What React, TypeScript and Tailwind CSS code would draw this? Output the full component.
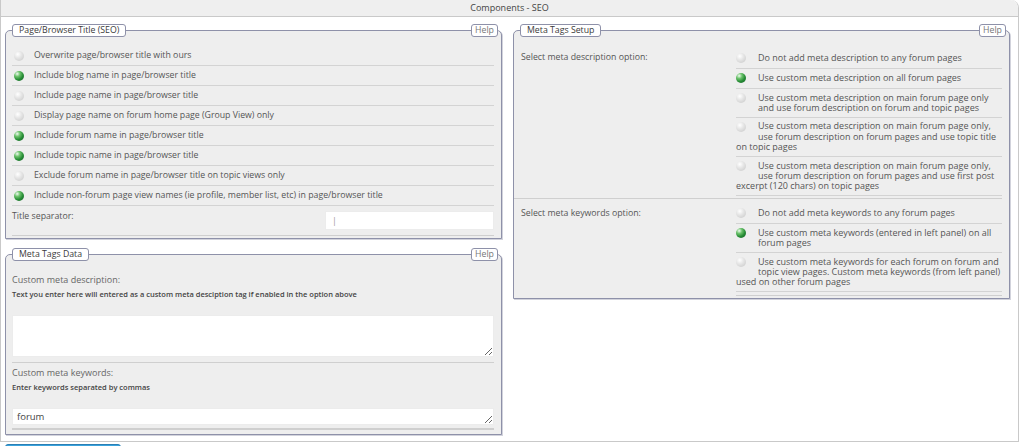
import React from "react";

const Radio = ({ on }: { on: boolean }) => (
  <span
    className={`block w-[10px] h-[10px] rounded-full ${
      on
        ? "bg-[radial-gradient(circle_at_32%_28%,#f2fbf2_0%,#6cc36c_28%,#258a34_60%,#17612a_100%)]"
        : "bg-[radial-gradient(circle_at_38%_32%,#ffffff_0%,#e6e6e6_40%,#c6c6c6_100%)]"
    }`}
  />
);

const Fieldset = ({
  legend,
  className,
  children,
}: {
  legend: string;
  className?: string;
  children: React.ReactNode;
}) => (
  <div
    className={`relative border border-[#8e91a9] rounded-t-[5px] bg-[#eeeeee] shadow-[1px_1px_0_#d2d3dc] ${className ?? ""}`}
  >
    <div className="absolute top-[-7px] left-[6px] h-[13px] px-[6px] bg-white border border-[#8e91a9] rounded-[3px] text-[8.75px] leading-[11px] text-[#3a3a3a]">
      {legend}
    </div>
    <div className="absolute top-[-7px] right-[3px] h-[13px] w-[27px] bg-white border border-[#8e91a9] rounded-[3px] text-[8.75px] leading-[11px] text-[#777] text-center">
      Help
    </div>
    {children}
  </div>
);

const titleOptions = [
  { label: "Overwrite page/browser title with ours", on: false },
  { label: "Include blog name in page/browser title", on: true },
  { label: "Include page name in page/browser title", on: false },
  { label: "Display page name on forum home page (Group View) only", on: false },
  { label: "Include forum name in page/browser title", on: true },
  { label: "Include topic name in page/browser title", on: true },
  { label: "Exclude forum name in page/browser title on topic views only", on: false },
  {
    label: "Include non-forum page view names (ie profile, member list, etc) in page/browser title",
    on: true,
  },
];

const descOptions = [
  { lines: ["Do not add meta description to any forum pages"], on: false },
  { lines: ["Use custom meta description on all forum pages"], on: true },
  {
    lines: [
      "Use custom meta description on main forum page only",
      "and use forum description on forum and topic pages",
    ],
    on: false,
  },
  {
    lines: [
      "Use custom meta description on main forum page only,",
      "use forum description on forum pages and use topic title",
      "on topic pages",
    ],
    on: false,
  },
  {
    lines: [
      "Use custom meta description on main forum page only,",
      "use forum description on forum pages and use first post",
      "excerpt (120 chars) on topic pages",
    ],
    on: false,
  },
];

const keywordOptions = [
  { lines: ["Do not add meta keywords to any forum pages"], on: false },
  {
    lines: ["Use custom meta keywords (entered in left panel) on all", "forum pages"],
    on: true,
  },
  {
    lines: [
      "Use custom meta keywords for each forum on forum and",
      "topic view pages. Custom meta keywords (from left panel)",
      "used on other forum pages",
    ],
    on: false,
  },
];

const OptionRow = ({ lines, on }: { lines: string[]; on: boolean }) => (
  <div className="flow-root py-[3.5px] border-b border-[#d3d3d3] text-[9px] leading-[10.4px] text-[#555] whitespace-nowrap">
    <span className="float-left w-[22px] h-[12px] pt-[0.5px]">
      <Radio on={on} />
    </span>
    {lines.map((l, i) => (
      <React.Fragment key={i}>
        {i > 0 && <br />}
        {l}
      </React.Fragment>
    ))}
  </div>
);

export default function App() {
  return (
    <div className="bg-white min-h-[446px] font-['Open_Sans',sans-serif]">
      <div className="w-[1019px] border border-t-0 border-[#c9c9c9] rounded-tr-[8px] bg-white">
        {/* header */}
        <div className="h-[17px] border-b border-[#c9c9c9] rounded-tr-[8px] bg-[#efefef] text-center text-[9px] leading-[16px] text-[#444]">
          Components - SEO
        </div>

        <div className="grid grid-cols-[497px_497px] gap-x-[11px] pl-[4px] pt-[13px] pb-[6px] items-start">
          {/* left column */}
          <div className="flex flex-col gap-[15px]">
            <Fieldset legend="Page/Browser Title (SEO)" className="pt-[15px] pb-[2px] pl-[6px] pr-[7px]">
              {titleOptions.map((o) => (
                <div
                  key={o.label}
                  className="h-[20px] flex items-center gap-[10px] pl-[2px] border-b border-[#d3d3d3] text-[8.75px] text-[#555]"
                >
                  <Radio on={o.on} />
                  <span>{o.label}</span>
                </div>
              ))}
              <div className="h-[30px] flex justify-between items-start pt-[5px] border-b border-[#cfcfcf]">
                <span className="text-[8.75px] leading-[10px] text-[#555]">Title separator:</span>
                <input
                  readOnly
                  value="|"
                  className="w-[169px] h-[19px] bg-white border border-[#ececec] px-[6px] text-[9px] text-[#999] outline-none"
                />
              </div>
            </Fieldset>

            <Fieldset legend="Meta Tags Data" className="pt-[19px] pb-[4px] pl-[6px] pr-[7px]">
              <div className="flex flex-col border-b border-[#cfcfcf] pb-[5px]">
                <span className="text-[9px] leading-[12px] text-[#666]">Custom meta description:</span>
                <span className="mt-[3px] text-[7.5px] leading-[10px] font-semibold text-[#444]">
                  Text you enter here will entered as a custom meta desciption tag if enabled in the option above
                </span>
                <textarea
                  readOnly
                  className="mt-[16px] h-[42px] w-full bg-white border border-[#ececec] outline-none resize-y"
                />
              </div>
              <div className="flex flex-col border-b-2 border-[#cfcfcf] pt-[4px] pb-[3px]">
                <span className="text-[9px] leading-[12px] text-[#666]">Custom meta keywords:</span>
                <span className="mt-[3px] text-[7.5px] leading-[10px] font-semibold text-[#444]">
                  Enter keywords separated by commas
                </span>
                <textarea
                  readOnly
                  value="forum"
                  className="mt-[16px] h-[17px] w-full bg-white border border-[#ececec] px-[4px] py-0 text-[9.5px] leading-[15px] text-[#444] outline-none resize-y overflow-hidden"
                />
              </div>
            </Fieldset>
          </div>

          {/* right column */}
          <Fieldset legend="Meta Tags Setup" className="pt-[18px] pb-[2px] pr-[7px]">
            <div className="flex border-b border-[#cfcfcf] pb-[2px]">
              <div className="w-[222px] pl-[7px] pt-[3px] text-[8.75px] leading-[10.4px] text-[#555]">
                Select meta description option:
              </div>
              <div className="flex-1">
                {descOptions.map((o, i) => (
                  <OptionRow key={i} lines={o.lines} on={o.on} />
                ))}
              </div>
            </div>
            <div className="flex pt-[5px]">
              <div className="w-[222px] pl-[7px] pt-[4px] text-[8.75px] leading-[10.4px] text-[#555]">
                Select meta keywords option:
              </div>
              <div className="flex-1 pb-[3px] border-b border-[#cfcfcf]">
                {keywordOptions.map((o, i) => (
                  <OptionRow key={i} lines={o.lines} on={o.on} />
                ))}
              </div>
            </div>
          </Fieldset>
        </div>
      </div>
      <button
        aria-label="Update"
        className="block ml-[5px] mt-[2px] w-[116px] h-[22px] rounded-[3px] border border-[#2a7fb5] bg-[#3aa3dc]"
      />
    </div>
  );
}
